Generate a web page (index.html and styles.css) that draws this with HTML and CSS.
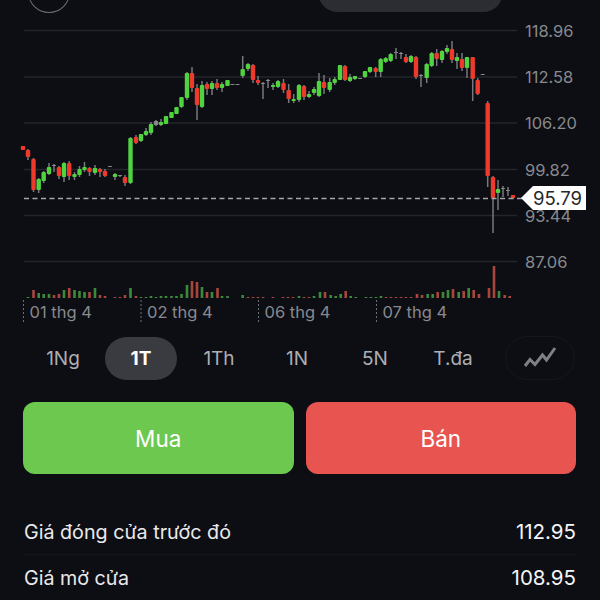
FILE: index.html
```html
<!DOCTYPE html>
<html lang="vi">
<head>
    <meta charset="UTF-8">
    <title>Biểu đồ giá</title>
    <link rel="stylesheet" href="styles.css">
</head>
<body>
    <div class="top-bar">
        <div class="round-btn"><div class="round-mark"></div></div>
        <div class="top-pill"></div>
    </div>

    <svg id="chart" class="chart" viewBox="0 14 600 316" width="600" height="316">
        <g id="grid"></g>
        <g id="volumes"></g>
        <g id="candles"></g>
        <line class="last-line" x1="24" y1="198.5" x2="522" y2="198.5"></line>
        <polygon class="price-tag" points="521,198 533,186 586,186 586,210 533,210"></polygon>
        <text class="price-text" x="533" y="204.5">95.79</text>
    </svg>

    <div class="tabs">
        <div class="tab">1Ng</div>
        <div class="tab active">1T</div>
        <div class="tab">1Th</div>
        <div class="tab">1N</div>
        <div class="tab">5N</div>
        <div class="tab">T.đa</div>
        <div class="chart-type">
            <svg viewBox="0 0 36 24" width="36" height="24">
                <polyline points="3,20 8,13.5 13,18.5 20.5,9 24.5,14 33,2"></polyline>
            </svg>
        </div>
    </div>

    <div class="trade">
        <button class="buy">Mua</button>
        <button class="sell">Bán</button>
    </div>

    <div class="stats">
        <div class="stat"><span>Giá đóng cửa trước đó</span><span class="value">112.95</span></div>
        <div class="stat"><span>Giá mở cửa</span><span class="value">108.95</span></div>
    </div>

    <script src="chart.js"></script>
</body>
</html>
```
FILE: styles.css
```css
body {
    margin: 0;
    width: 600px;
    height: 600px;
    overflow: hidden;
    background-color: #0d0e14;
    color: #e9e9eb;
    font-family: 'Inter', 'Liberation Sans', sans-serif;
}
.top-bar {
    display: flex;
    align-items: flex-end;
    height: 40px;
    margin-top: -28px;
    margin-bottom: 2px;
    padding-left: 28px;
}
.round-btn {
    display: flex;
    align-items: flex-end;
    box-sizing: border-box;
    width: 42px;
    height: 41px;
    margin-bottom: -1px;
    padding: 0 0 12px 11px;
    border: 1.5px solid #6d6e72;
    border-radius: 50%;
}
.round-mark {
    width: 7px;
    height: 2px;
    background-color: #a5a5a9;
}
.top-pill {
    width: 185px;
    height: 40px;
    margin-left: 248px;
    background-color: #2c2d32;
    border-radius: 20px;
}
.chart {
    display: block;
}
.grid-line {
    stroke: #24252b;
    stroke-width: 1.5;
}
.axis-label {
    fill: #88898d;
    font-size: 16.5px;
}
.date-tick {
    stroke: #6f7074;
    stroke-width: 1;
    stroke-dasharray: 2 2;
}
.date-label {
    fill: #88898d;
    font-size: 16.5px;
}
.last-line {
    stroke: #a5a5a8;
    stroke-width: 1.5;
    stroke-dasharray: 5 3.5;
}
.price-tag {
    fill: #fff;
}
.price-text {
    fill: #26272b;
    font-size: 18.5px;
}
.wick {
    fill: #77787d;
}
.body-up {
    fill: #4fd33f;
}
.body-down {
    fill: #ee3a2c;
}
.body-flat {
    fill: #88898d;
}
.vol-up {
    fill: #3b8a3c;
}
.vol-down {
    fill: #a8453c;
}
.tabs {
    display: grid;
    grid-template-columns: repeat(6, 78px) 1fr;
    grid-template-rows: 44px;
    align-items: center;
    justify-items: center;
    margin-top: 6px;
    padding: 0 23px 0 24px;
}
.tab {
    width: 72px;
    height: 43px;
    line-height: 43px;
    border-radius: 22px;
    text-align: center;
    font-size: 19px;
    color: #aeaeb3;
}
.tab.active {
    background-color: #3a3b40;
    color: #fff;
    font-weight: 700;
}
.chart-type {
    display: flex;
    align-items: center;
    justify-content: center;
    box-sizing: border-box;
    width: 70px;
    height: 44px;
    margin-left: 11px;
    border: 1px solid #16171d;
    border-radius: 22px;
}
.chart-type polyline {
    fill: none;
    stroke: #7f8084;
    stroke-width: 3;
}
.trade {
    display: flex;
    gap: 12px;
    margin-top: 22px;
    padding: 0 24px 0 23px;
}
.trade button {
    flex: 1;
    height: 72px;
    border: none;
    border-radius: 12px;
    color: #fff;
    font-family: inherit;
    font-size: 22.5px;
    font-weight: 400;
}
.buy {
    background-color: #6cc84f;
}
.sell {
    background-color: #e8544f;
}
.stats {
    margin-top: 35px;
    padding: 0 24px;
}
.stat {
    display: flex;
    justify-content: space-between;
    align-items: center;
    height: 45px;
    font-size: 19.7px;
    border-bottom: 1px solid #15161c;
}
.stat:last-child {
    border-bottom: none;
}
.value {
    font-size: 20.5px;
    color: #f4f4f5;
}
```
FILE: chart.js
```js
const NS = 'http://www.w3.org/2000/svg';

// x, type (u/d/f), wick top, body top, body bottom, wick bottom
const candles = [
    [23, 'd', 146, 146, 150, 150], [28, 'd', 149, 150, 157, 160], [33.5, 'd', 158, 159, 190, 192],
    [38.7, 'u', 178, 179, 190, 193], [43.7, 'u', 171, 172, 181, 183], [49, 'u', 163, 167, 174, 175],
    [54, 'f', 164, 165, 166, 172], [59, 'd', 166, 167, 176, 179], [64, 'u', 162, 163, 177, 182],
    [69.2, 'd', 161, 163, 176, 180], [74.5, 'u', 172, 174, 177, 180], [79.5, 'u', 166, 169, 175, 177],
    [84.5, 'u', 162, 167, 170, 172], [89.5, 'd', 167, 168, 172, 176], [95, 'u', 165, 168, 173, 175],
    [100, 'd', 168, 169, 172, 177], [105, 'd', 169, 171, 176, 177], [110, 'f', 166, 166, 167, 167],
    [115, 'u', 173, 174, 177, 180], [120, 'f', 175, 175, 176, 177], [125, 'd', 175, 177, 183, 186],
    [130.5, 'u', 137, 138, 183, 184], [136, 'd', 135, 137, 143, 144], [141, 'u', 134, 134, 141, 142],
    [146, 'u', 128, 131, 135, 136], [151, 'u', 122, 124, 133, 135], [156, 'f', 120, 121, 125, 126],
    [161, 'u', 119, 122, 125, 126], [166, 'u', 116, 116, 124, 124], [171.5, 'u', 112, 112, 118, 118],
    [176.5, 'u', 107, 107, 114, 114], [181.5, 'u', 97, 97, 107, 108], [187, 'u', 72, 73, 98, 100],
    [192, 'd', 67, 73, 88, 92], [197, 'd', 84, 88, 105, 120], [202, 'u', 81, 85, 107, 108],
    [207, 'd', 82, 84, 89, 95], [212, 'u', 81, 83, 89, 95], [217, 'd', 79, 83, 88, 90],
    [222, 'u', 82, 84, 88, 92], [227.5, 'u', 80, 80, 86, 86], [232.5, 'f', 84, 84, 85, 85],
    [237.5, 'f', 84, 84, 85, 85], [242.7, 'u', 56, 69, 76, 78], [248, 'u', 63, 64, 69, 71],
    [253, 'd', 64, 65, 80, 83], [258, 'd', 76, 80, 83, 85], [263, 'f', 82, 83, 84, 99],
    [268, 'f', 79, 80, 81, 88], [273, 'u', 83, 85, 87, 90], [278, 'u', 80, 81, 87, 88],
    [283.5, 'd', 79, 83, 90, 93], [288.7, 'd', 84, 90, 99, 103], [293.7, 'u', 94, 99, 101, 103],
    [299, 'u', 84, 85, 100, 102], [304, 'd', 85, 86, 97, 100], [309, 'u', 91, 94, 97, 98],
    [314, 'u', 87, 89, 93, 95], [319, 'u', 73, 81, 96, 97], [324, 'd', 75, 82, 88, 94],
    [329.7, 'u', 78, 82, 90, 92], [334.7, 'u', 77, 79, 83, 85], [340, 'u', 65, 65, 80, 80],
    [345, 'd', 65, 66, 80, 81], [350, 'u', 74, 77, 81, 82], [355, 'u', 76, 76, 79, 80],
    [360, 'f', 78, 78, 79, 79], [365, 'u', 71, 71, 77, 78], [370, 'u', 67, 67, 72, 73],
    [375.7, 'd', 67, 68, 72, 77], [380.7, 'u', 58, 59, 72, 77], [385.7, 'u', 57, 58, 62, 63],
    [390.7, 'u', 53, 54, 61, 62], [396, 'f', 48, 52, 53, 59], [401, 'f', 52, 53, 54, 59],
    [406, 'd', 54, 57, 62, 63], [411, 'u', 55, 56, 62, 63], [416, 'd', 56, 57, 77, 79],
    [421, 'f', 74, 75, 76, 87], [426.7, 'u', 63, 64, 78, 83], [431.7, 'u', 52, 53, 66, 67],
    [436.7, 'd', 49, 53, 59, 66], [442, 'u', 50, 51, 60, 63], [447, 'u', 45, 48, 52, 54],
    [452, 'd', 41, 49, 60, 63], [457, 'u', 53, 57, 61, 69], [462, 'd', 53, 59, 68, 71],
    [467, 'u', 57, 57, 68, 78], [472.7, 'd', 57, 57, 79, 101], [477.7, 'd', 78, 80, 94, 95],
    [482.7, 'f', 74, 74, 75, 75], [487.7, 'd', 101, 103, 176, 187], [493, 'd', 176, 177, 198, 233],
    [498, 'u', 180, 189, 193, 210], [503, 'f', 186, 188, 189, 197], [508, 'f', 187, 190, 191, 196],
    [513, 'd', 195, 195, 198, 199]
];

// x, type, height
const volumes = [
    [28, 'u', 1], [33.5, 'd', 8], [38.7, 'u', 5], [43.7, 'u', 4], [49, 'u', 4], [54, 'd', 3],
    [59, 'd', 4], [64, 'u', 8], [69.2, 'd', 10], [74.5, 'u', 8], [79.5, 'u', 7], [84.5, 'u', 6],
    [89.5, 'd', 6], [95, 'u', 10], [100, 'd', 3], [105, 'd', 2], [115, 'd', 1], [120, 'd', 1],
    [125, 'd', 3], [130.5, 'u', 10], [136, 'd', 2], [141, 'u', 1], [146, 'u', 1], [151, 'u', 2],
    [156, 'u', 1], [161, 'u', 2], [166, 'u', 2], [171.5, 'u', 2], [176.5, 'u', 2], [181.5, 'u', 4],
    [187, 'u', 13], [192, 'd', 17], [197, 'd', 16], [202, 'u', 11], [207, 'd', 6], [212, 'u', 6],
    [217.5, 'd', 10], [222, 'u', 2], [227.5, 'u', 2], [242.7, 'u', 3], [248, 'd', 1], [253, 'd', 1],
    [258, 'd', 1], [263, 'd', 1], [273, 'd', 1], [283, 'd', 1], [288, 'd', 1], [293, 'd', 1],
    [299, 'u', 2], [304, 'd', 1], [309, 'd', 1], [314, 'u', 2], [320, 'u', 6], [325, 'd', 6],
    [330.7, 'u', 3], [335.7, 'u', 2], [340.7, 'u', 4], [345.7, 'd', 7], [350.7, 'u', 2], [355.7, 'u', 1],
    [366, 'u', 1], [371, 'u', 1], [376, 'u', 1], [381, 'u', 2], [386, 'd', 1], [391, 'd', 1],
    [396, 'd', 1], [401, 'd', 1], [406, 'd', 1], [411, 'd', 1], [417, 'd', 4], [422, 'd', 3],
    [427.7, 'u', 4], [432.7, 'u', 4], [437.7, 'd', 6], [443, 'u', 6], [448, 'u', 8], [453, 'd', 9],
    [458.7, 'u', 6], [463.7, 'd', 7], [468.7, 'u', 10], [473.7, 'd', 8], [479, 'd', 4], [489, 'd', 10],
    [494, 'd', 32], [499, 'u', 7], [504.7, 'd', 3], [509.7, 'd', 2]
];

const gridLines = [
    [30.5, '118.96'], [77, '112.58'], [123, '106.20'],
    [169.5, '99.82'], [215.5, '93.44'], [261.5, '87.06']
];

const dates = [[23.5, '01 thg 4'], [141, '02 thg 4'], [258.5, '06 thg 4'], [376.5, '07 thg 4']];

function add(parent, tag, attrs, text) {
    const el = document.createElementNS(NS, tag);
    for (const key in attrs) {
        el.setAttribute(key, attrs[key]);
    }
    if (text) {
        el.textContent = text;
    }
    parent.appendChild(el);
}

const grid = document.getElementById('grid');
gridLines.forEach(([y, label]) => {
    add(grid, 'line', { class: 'grid-line', x1: 24, y1: y, x2: 517, y2: y });
    add(grid, 'text', { class: 'axis-label', x: 525, y: y + 6 }, label);
});
dates.forEach(([x, label]) => {
    add(grid, 'line', { class: 'date-tick', x1: x, y1: 300, x2: x, y2: 322 });
    add(grid, 'text', { class: 'date-label', x: x + 6, y: 318 }, label);
});

const volumeGroup = document.getElementById('volumes');
volumes.forEach(([x, type, h]) => {
    add(volumeGroup, 'rect', {
        class: type === 'u' ? 'vol-up' : 'vol-down',
        x: x - 1.3, y: 298 - h, width: 2.6, height: h
    });
});

const candleGroup = document.getElementById('candles');
const bodyClass = { u: 'body-up', d: 'body-down', f: 'body-flat' };
candles.forEach(([x, type, high, top, bottom, low]) => {
    add(candleGroup, 'rect', { class: 'wick', x: x - 0.75, y: high, width: 1.5, height: low - high });
    add(candleGroup, 'rect', {
        class: bodyClass[type],
        x: x - 2.2, y: top, width: 4.4, height: bottom - top, rx: 1
    });
});
```
